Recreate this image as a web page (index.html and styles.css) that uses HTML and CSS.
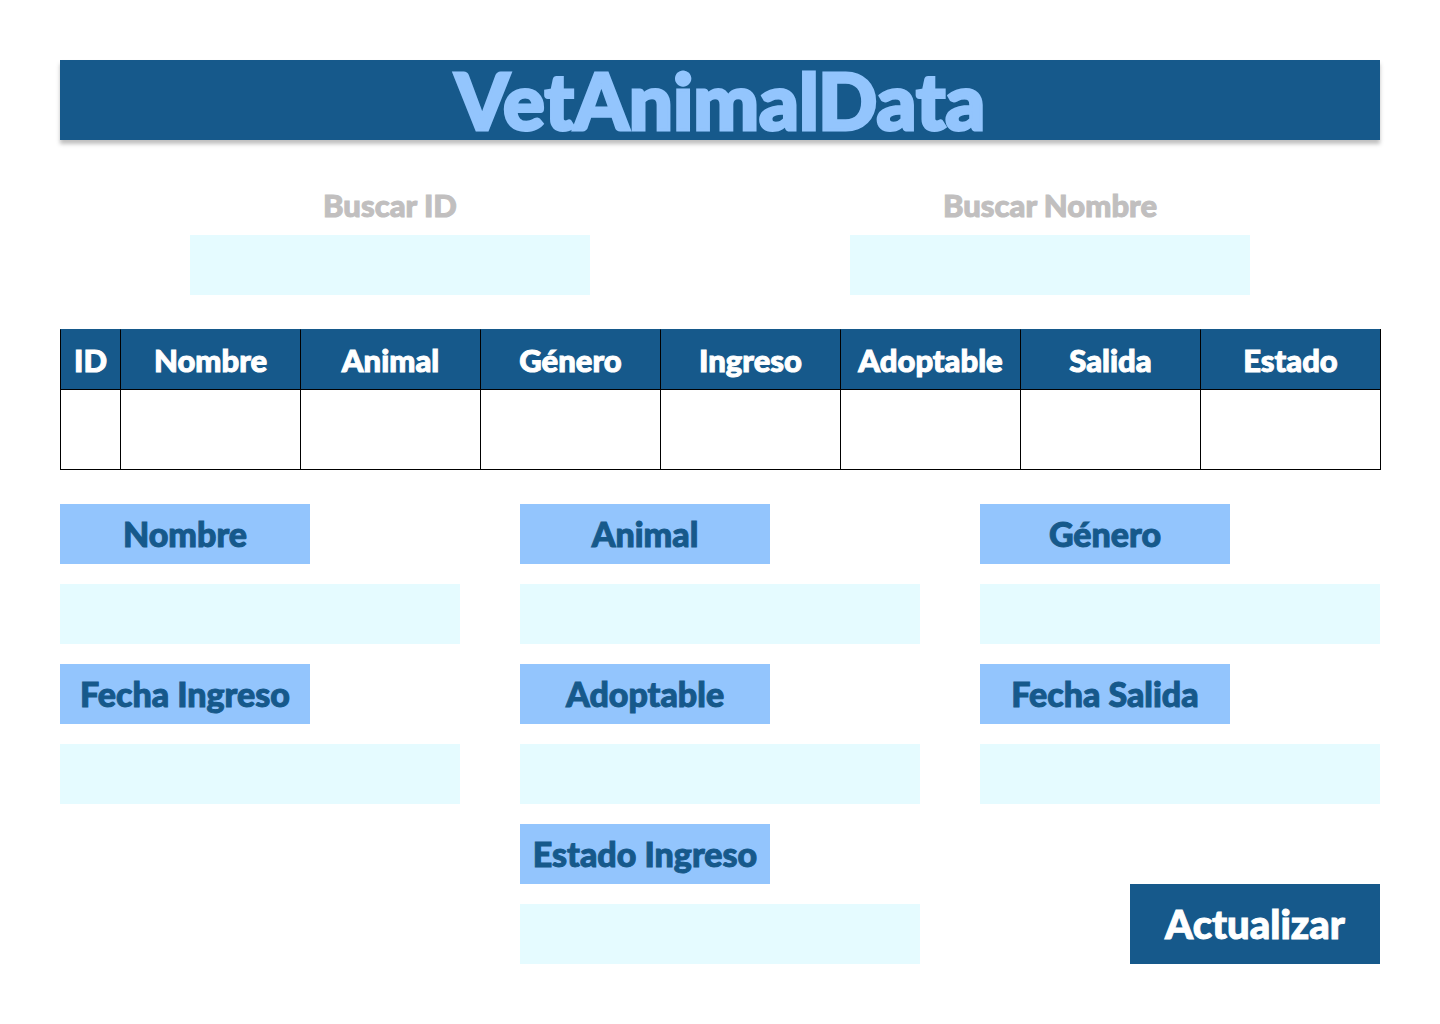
FILE: index.html
```html
<!DOCTYPE html>
<html lang="es">
<head>
  <meta charset="utf-8">
  <meta name="viewport" content="width=device-width, initial-scale=1">
  <title>VetAnimalData</title>
  <link rel="stylesheet" href="styles.css">
</head>
<body>
  <header class="banner">
    <h1 class="banner-title">VetAnimalData</h1>
  </header>

  <main>
    <form class="search" role="search">
      <div class="search-field">
        <label class="search-label" for="buscar-id">Buscar ID</label>
        <input class="input search-input" id="buscar-id" type="text">
      </div>
      <div class="search-field">
        <label class="search-label" for="buscar-nombre">Buscar Nombre</label>
        <input class="input search-input" id="buscar-nombre" type="text">
      </div>
    </form>

    <table class="records">
      <thead>
        <tr>
          <th class="col-id" scope="col">ID</th>
          <th scope="col">Nombre</th>
          <th scope="col">Animal</th>
          <th scope="col">Género</th>
          <th scope="col">Ingreso</th>
          <th scope="col">Adoptable</th>
          <th scope="col">Salida</th>
          <th scope="col">Estado</th>
        </tr>
      </thead>
      <tbody>
        <tr>
          <td></td><td></td><td></td><td></td><td></td><td></td><td></td><td></td>
        </tr>
      </tbody>
    </table>

    <form class="editor">
      <div class="field">
        <label class="field-label" for="nombre">Nombre</label>
        <input class="input" id="nombre" type="text">
      </div>
      <div class="field">
        <label class="field-label" for="animal">Animal</label>
        <input class="input" id="animal" type="text">
      </div>
      <div class="field">
        <label class="field-label" for="genero">Género</label>
        <input class="input" id="genero" type="text">
      </div>
      <div class="field">
        <label class="field-label" for="fecha-ingreso">Fecha Ingreso</label>
        <input class="input" id="fecha-ingreso" type="text">
      </div>
      <div class="field">
        <label class="field-label" for="adoptable">Adoptable</label>
        <input class="input" id="adoptable" type="text">
      </div>
      <div class="field">
        <label class="field-label" for="fecha-salida">Fecha Salida</label>
        <input class="input" id="fecha-salida" type="text">
      </div>
      <div class="field field-center">
        <label class="field-label" for="estado-ingreso">Estado Ingreso</label>
        <input class="input" id="estado-ingreso" type="text">
      </div>
      <button class="submit" type="submit">Actualizar</button>
    </form>
  </main>
</body>
</html>
```
FILE: styles.css
```css
:root {
  --navy: #16598b;
  --sky: #93c5fd;
  --ice: #e5fbff;
  --muted: #c1bfbf;
}

* {
  box-sizing: border-box;
}

body {
  margin: 0;
  padding: 60px;
  background: #fff;
  font-family: Lato, "Open Sans", sans-serif;
  font-weight: 900;
  -webkit-text-stroke: 1px currentColor;
}

.banner {
  background: var(--navy);
  box-shadow: 0 4px 4px rgba(0, 0, 0, 0.25);
}

.banner-title {
  margin: 0;
  color: var(--sky);
  font-size: 78px;
  font-weight: 900;
  line-height: 80px;
  text-align: center;
  -webkit-text-stroke: 3px currentColor;
}

.input {
  width: 100%;
  height: 60px;
  padding: 0 16px;
  border: 0;
  border-radius: 0;
  background: var(--ice);
  color: var(--navy);
  font: inherit;
  font-size: 31px;
}

.search {
  display: grid;
  grid-template-columns: 1fr 1fr;
  margin-top: 45px;
}

.search-field {
  display: flex;
  flex-direction: column;
  align-items: center;
  gap: 10px;
}

.search-label {
  color: var(--muted);
  font-size: 31px;
  line-height: 40px;
}

.search-input {
  max-width: 400px;
}

.records {
  width: calc(100% + 1px);
  margin: 34px -1px 34px 0;
  border-right: 1px solid #000;
  border-spacing: 0;
  table-layout: fixed;
}

.records th,
.records td {
  padding: 0;
  border-bottom: 1px solid #000;
  border-left: 1px solid #000;
}

.records th {
  height: 61px;
  border-top: 1px solid var(--navy);
  background: var(--navy);
  color: #fff;
  font-size: 31px;
  font-weight: 900;
  text-align: center;
}

.records td {
  height: 80px;
}

.records .col-id {
  width: 60px;
}

.editor {
  display: grid;
  grid-template-columns: repeat(3, 1fr);
  gap: 20px 60px;
}

.field {
  display: flex;
  flex-direction: column;
  align-items: flex-start;
  gap: 20px;
}

.field-center {
  grid-column: 2;
}

.field-label {
  width: 250px;
  background: var(--sky);
  color: var(--navy);
  font-size: 34px;
  line-height: 60px;
  text-align: center;
  white-space: nowrap;
}

.submit {
  place-self: end;
  width: 250px;
  height: 80px;
  padding: 0;
  border: 0;
  background: var(--navy);
  color: #fff;
  font: inherit;
  font-size: 40px;
  cursor: pointer;
}
```
